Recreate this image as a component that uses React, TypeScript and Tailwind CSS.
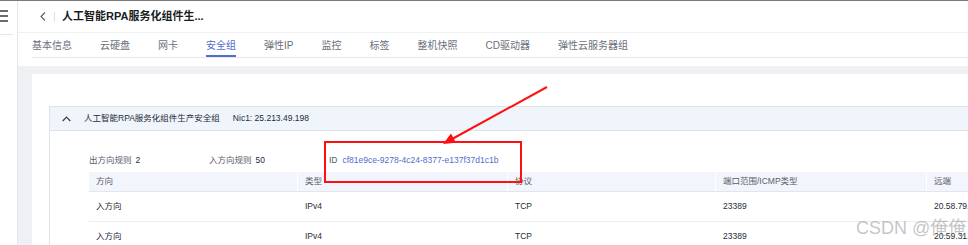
import React from "react";

const font = "font-['Liberation_Sans','Noto_Sans_CJK_SC',sans-serif]";

const tabs = ["基本信息", "云硬盘", "网卡", "安全组", "弹性IP", "监控", "标签", "整机快照", "CD驱动器", "弹性云服务器组"];

const rows = [
  ["入方向", "IPv4", "TCP", "23389", "20.58.79.198/32"],
  ["入方向", "IPv4", "TCP", "23389", "20.59.31.106/32"],
];

const cols = "grid grid-cols-[208px_210px_208px_211px_1fr]";

export default function App() {
  return (
    <div className={`relative h-[245px] w-[968px] overflow-hidden border-t border-[#7a7a7a] bg-white ${font}`}>
      <div className="flex h-full">
        {/* sidebar */}
        <aside className="flex w-[18px] shrink-0 flex-col border-r border-[#e4e6ea] pt-[9px]">
          <svg width="9" height="12" viewBox="0 0 9 12" className="block">
            <path d="M0 1h8M0 6h8M0 11h8" stroke="#3a3d45" strokeWidth="1.3" />
          </svg>
          <div className="mt-[12px] h-px w-[13px] bg-[#e4e6ea]" />
        </aside>

        <main className="flex min-w-0 flex-1 flex-col">
          {/* header */}
          <header className="flex h-[32px] shrink-0 items-center border-b border-[#f0f1f3] pl-[22px]">
            <svg width="6" height="9" viewBox="0 0 6 9">
              <path d="M5 0.5L1 4.5L5 8.5" fill="none" stroke="#575d6c" strokeWidth="1.1" />
            </svg>
            <div className="ml-[8px] h-[10px] w-px bg-[#dfe1e6]" />
            <h1 className="ml-[7px] text-[11px] font-bold text-[#191c22]">人工智能RPA服务化组件生...</h1>
          </header>

          {/* tabs */}
          <div className="shrink-0 pb-[8px] pl-[14px]">
            <nav className="flex gap-[28px] border-b border-[#e4e6ea]">
              {tabs.map((t) => (
                <div
                  key={t}
                  className={`flex h-[24px] items-center border-b-2 pt-[2px] text-[10px] ${
                    t === "安全组" ? "border-[#526ecc] text-[#526ecc]" : "border-transparent text-[#6b707c]"
                  }`}
                >
                  {t}
                </div>
              ))}
            </nav>
          </div>

          {/* content */}
          <div className="flex-1 bg-[#eef0f4] pl-[14px] pt-[8px]">
            <div className="h-full bg-white pl-[17px] pt-[32px]">
              <div className="h-full border-l border-t border-[#dfe3ea]">
                <div className="flex h-[24px] items-center gap-[13px] border-b border-[#dfe3ea] bg-[#f0f4fb] pl-[12px] text-[8.5px] text-[#252b3a]">
                  <svg width="9" height="6" viewBox="0 0 9 6">
                    <path d="M0.7 5L4.5 1.2L8.3 5" fill="none" stroke="#3a3d45" strokeWidth="1.2" />
                  </svg>
                  <span>人工智能RPA服务化组件生产安全组</span>
                  <span>Nic1: 25.213.49.198</span>
                </div>

                <div className="pl-[39px] pt-[21px]">
                  <div className="mb-[4px] flex h-[16px] items-center text-[8.5px]">
                    <div className="w-[120px]">
                      <span className="text-[#575d6c]">出方向规则</span>
                      <span className="ml-[4px] text-[#252b3a]">2</span>
                    </div>
                    <div className="w-[120px]">
                      <span className="text-[#575d6c]">入方向规则</span>
                      <span className="ml-[4px] text-[#252b3a]">50</span>
                    </div>
                    <div>
                      <span className="text-[#575d6c]">ID</span>
                      <span className="ml-[5px] text-[#526ecc]">cf81e9ce-9278-4c24-8377-e137f37d1c1b</span>
                    </div>
                  </div>

                  <div className="text-[8.5px]">
                    <div className={`${cols} h-[20px] items-center border-b border-[#e2e5ec] bg-[#f2f5fb] text-[#575d6c]`}>
                      {["方向", "类型", "协议", "端口范围/ICMP类型", "远端"].map((h, i) => (
                        <div
                          key={h}
                          className={`flex h-full items-center whitespace-nowrap ${i === 0 ? "pl-[7px]" : "border-l border-white pl-[7px]"}`}
                        >
                          {h}
                        </div>
                      ))}
                    </div>
                    {rows.map((r, ri) => (
                      <div key={ri} className={`${cols} h-[30px] items-center border-b border-[#eceef2] text-[#252b3a]`}>
                        {r.map((c, i) => (
                          <div key={i} className={`whitespace-nowrap ${i === 0 ? "pl-[7px]" : "pl-[8px]"}`}>
                            {c}
                          </div>
                        ))}
                      </div>
                    ))}
                  </div>
                </div>
              </div>
            </div>
          </div>
        </main>
      </div>

      {/* annotation: red box + arrow */}
      <div className="absolute left-[324px] top-[140px] h-[42px] w-[198px] border-2 border-[#ff1010]" />
      <svg className="pointer-events-none absolute left-0 top-0" width="968" height="245">
        <line x1="547" y1="86" x2="453" y2="137.5" stroke="#ff1010" strokeWidth="2" />
        <polygon points="443,143 456,141.8 451,132.6" fill="#ff1010" />
      </svg>

      {/* watermark */}
      <div className="absolute left-[856px] top-[218px] whitespace-nowrap text-[18px] leading-[18px] text-[#8c8c8c]/50">
        CSDN @俺俺
      </div>
    </div>
  );
}
